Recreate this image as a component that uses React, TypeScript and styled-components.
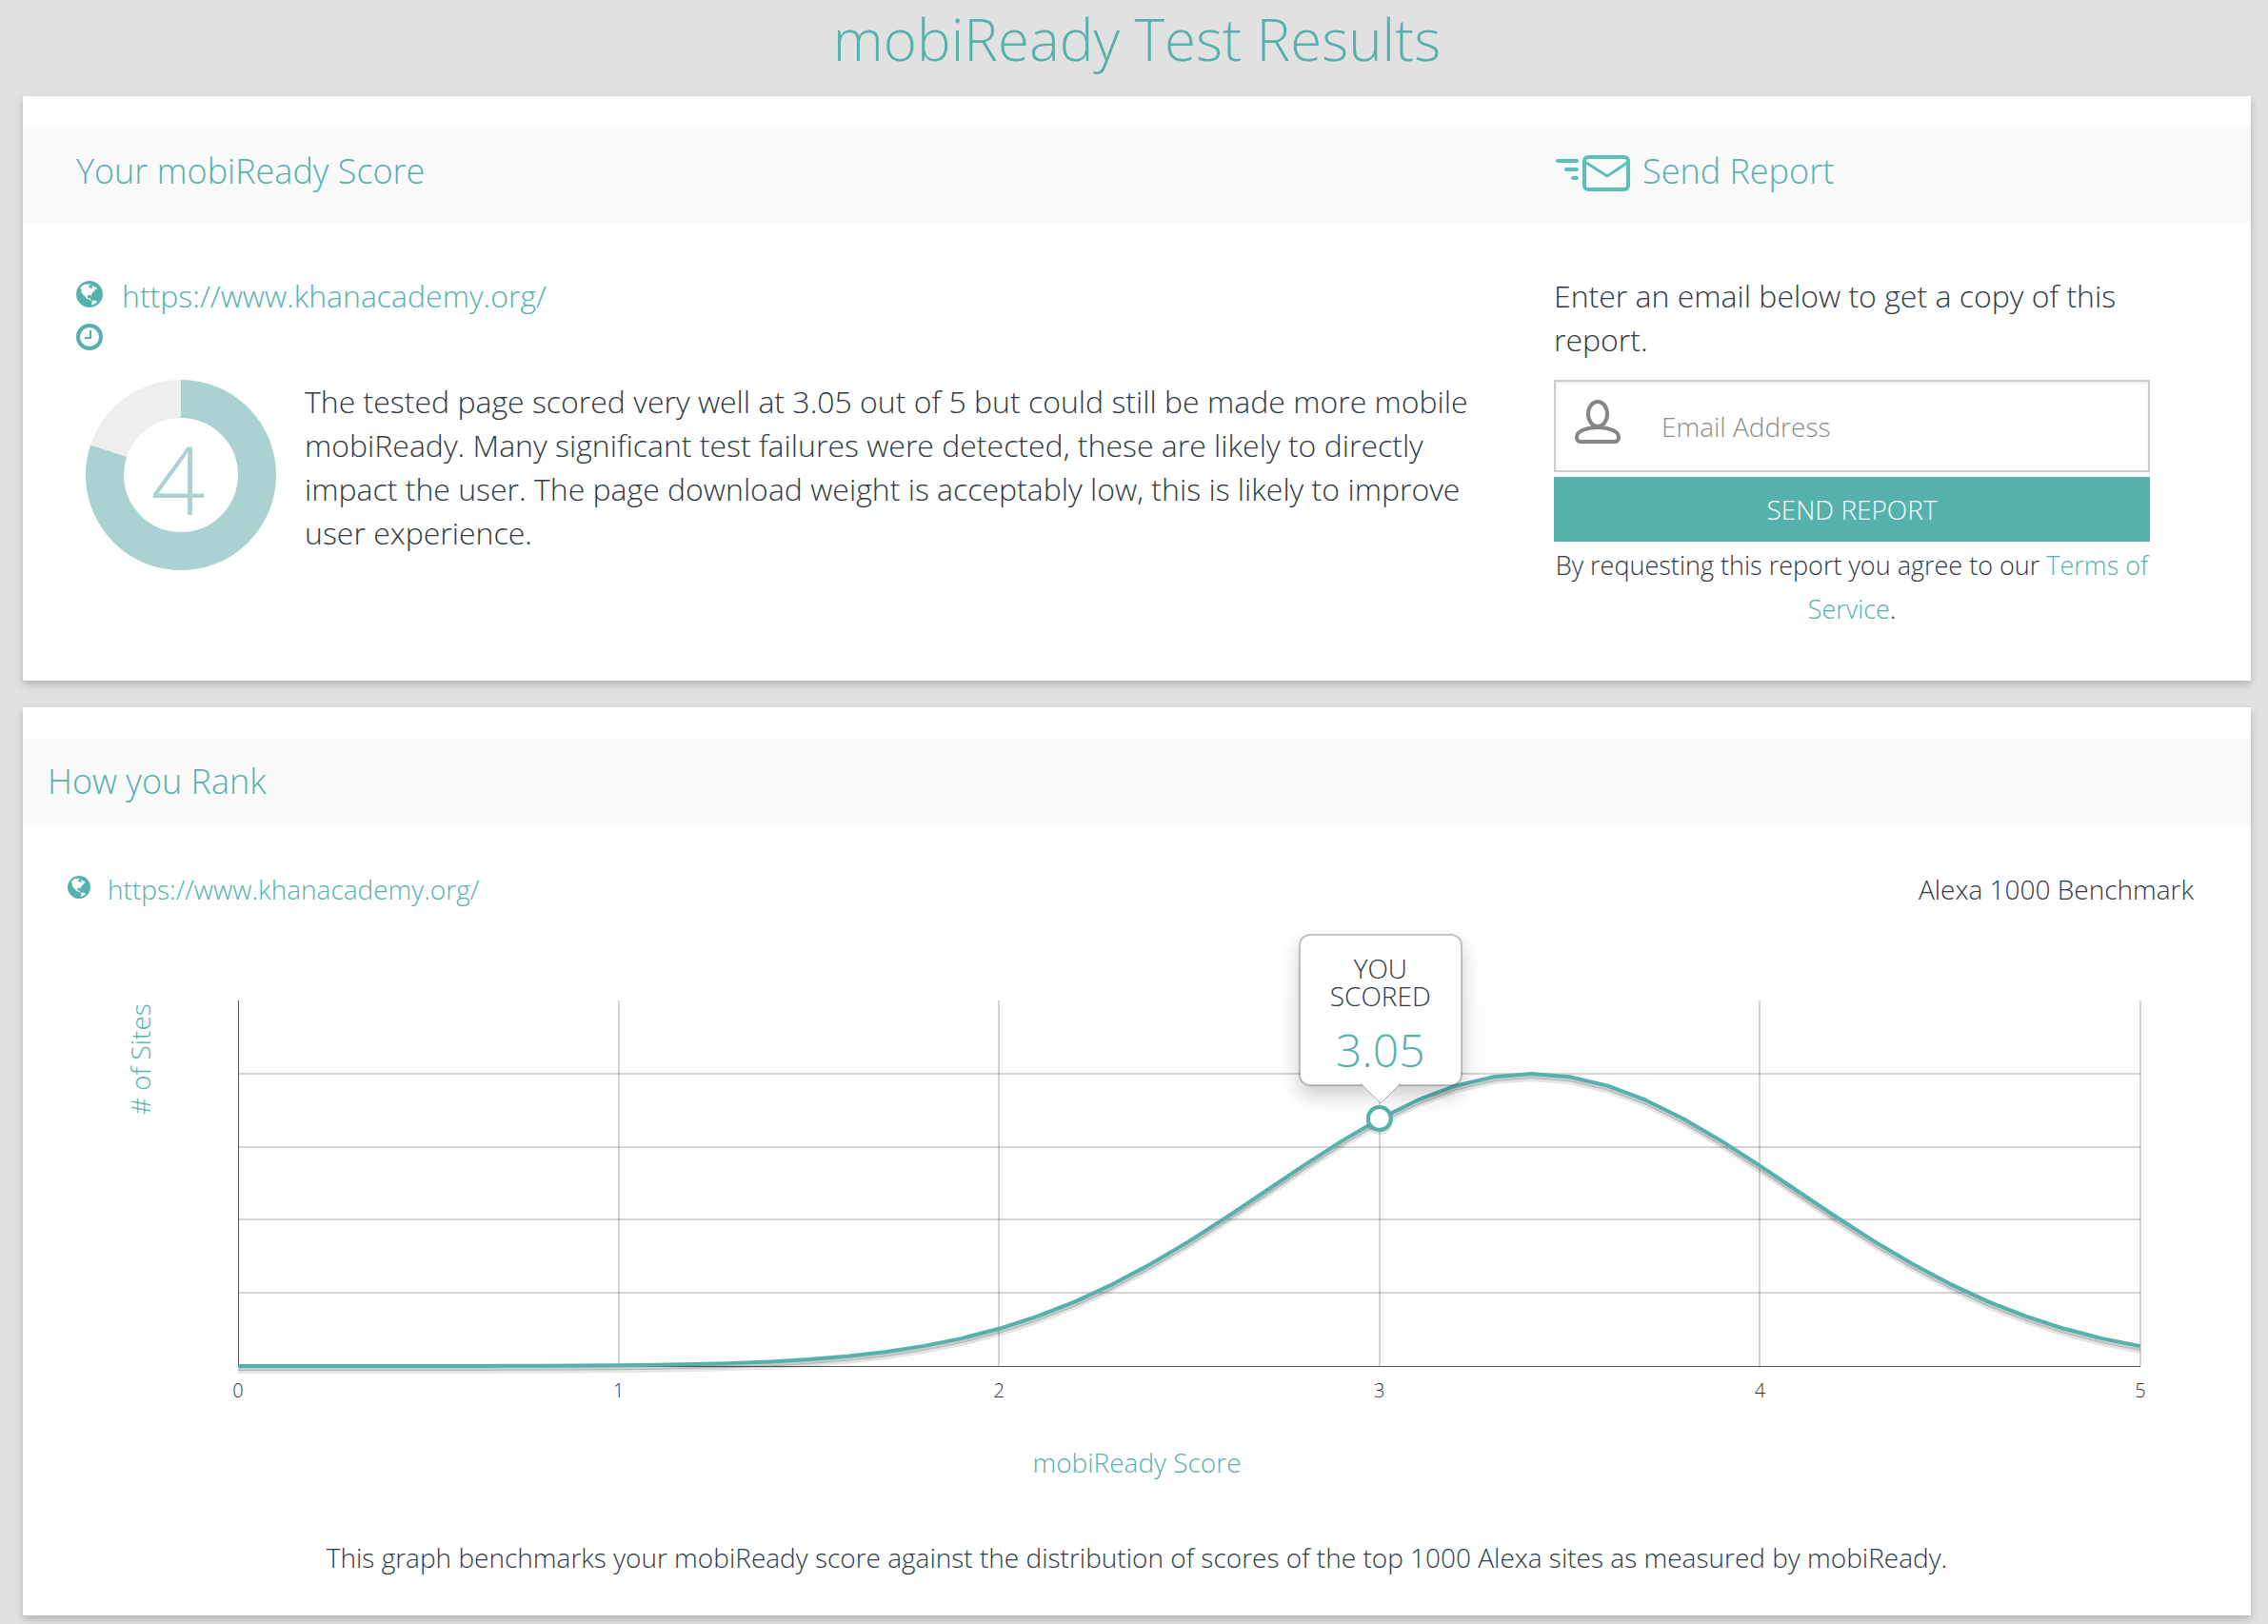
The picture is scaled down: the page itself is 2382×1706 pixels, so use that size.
import React from "react";
import styled, { createGlobalStyle, css } from "styled-components";

const teal = "#55b1ab";
const ink = "#2f3a45";

const GlobalStyle = createGlobalStyle`
  *, *::before, *::after { box-sizing: border-box; }
  body {
    margin: 0;
    background: #e1e1e1;
    color: ${ink};
    font: 300 32px/46px "Open Sans", "Noto Sans", sans-serif;
  }
  h1, h2, p { margin: 0; font-weight: 300; }
  a { color: ${teal}; text-decoration: none; }
  svg { display: block; flex: none; }
`;

const Page = styled.main`
  display: flex;
  flex-direction: column;
  gap: 28px;
  padding: 0 18px 9px 24px;
`;

const Title = styled.h1`
  height: 73px;
  color: ${teal};
  font-size: 60px;
  line-height: 82px;
  text-align: center;
`;

const Card = styled.section`
  padding-top: 32px;
  background: #fff;
  box-shadow: 0 4px 8px rgba(0, 0, 0, 0.2);
`;

const columns = css`
  display: grid;
  grid-template-columns: minmax(0, 1fr) 626px;
  column-gap: 80px;
  padding-left: 56px;
  padding-right: 106px;
`;

const ScoreHeader = styled.div`
  ${columns}
  height: 101px;
  padding-bottom: 8px;
  align-items: center;
  background: #fafafa;
`;

const RankHeader = styled.div`
  display: flex;
  align-items: center;
  height: 92px;
  padding: 0 26px;
  background: #fafafa;
`;

const Heading = styled.h2`
  display: flex;
  align-items: center;
  gap: 13px;
  color: ${teal};
  font-size: 36px;
  line-height: 48px;
`;

const ScoreBody = styled.div`
  ${columns}
  padding-top: 54px;
  padding-bottom: 52px;
`;

const SiteLine = styled.div`
  display: flex;
  align-items: center;
  gap: 20px;
  height: 46px;
  color: ${teal};
`;

const SmallSiteLine = styled(SiteLine)`
  gap: 18px;
`;

const ClockLine = styled(SiteLine)`
  height: 40px;
`;

const Summary = styled.div`
  display: flex;
  gap: 30px;
  padding: 25px 0 0 10px;
`;

const SendForm = styled.form`
  display: flex;
  flex-direction: column;
`;

const Field = styled.label`
  display: flex;
  align-items: center;
  gap: 43px;
  height: 97px;
  margin: 19px 0 5px;
  padding: 0 20px;
  border: 2px solid #ccc;
  box-shadow: inset 0 2px 2px rgba(0, 0, 0, 0.075);
`;

const EmailInput = styled.input`
  flex: 1;
  min-width: 0;
  padding: 0;
  border: 0;
  outline: 0;
  background: transparent;
  color: ${ink};
  font: inherit;
  font-size: 28px;
  &::placeholder { color: #8c8c8c; opacity: 1; }
`;

const SendButton = styled.button`
  height: 68px;
  border: 0;
  background: ${teal};
  color: #fff;
  font: inherit;
  font-size: 28px;
  text-transform: uppercase;
  cursor: pointer;
`;

const Terms = styled.p`
  padding-top: 2px;
  font-size: 27px;
  text-align: center;
`;

const BenchmarkBar = styled.div`
  display: flex;
  justify-content: space-between;
  padding: 44px 60px 0 47px;
  font-size: 28px;
`;

const Plot = styled.figure`
  display: grid;
  grid-template-columns: 96px minmax(0, 1fr);
  column-gap: 80px;
  margin: 0;
  padding: 94px 116px 0 50px;
`;

const AxisY = styled.span`
  justify-self: end;
  height: 120px;
  color: ${teal};
  font-size: 28px;
  line-height: 46px;
  writing-mode: vertical-rl;
  transform: rotate(180deg);
`;

const Chart = styled.div`
  position: relative;
`;

const Curve = styled.svg`
  width: 100%;
  height: 384px;
  overflow: visible;
`;

const Ticks = styled.div`
  display: flex;
  justify-content: space-between;
  margin: 12px -10px 0;
  color: #333;
  font-size: 20px;
  line-height: 28px;
  span { width: 20px; text-align: center; }
`;

const AxisX = styled.p`
  padding-top: 38px;
  color: ${teal};
  font-size: 28px;
  text-align: center;
`;

const Note = styled.p`
  padding: 54px 0 38px;
  font-size: 28px;
  text-align: center;
`;

const Bubble = styled.div`
  position: absolute;
  left: 60%;
  top: -70px;
  width: 172px;
  height: 160px;
  margin-left: -85px;
  padding-top: 20px;
  border: 2px solid rgba(0, 0, 0, 0.22);
  border-radius: 12px;
  background: #fff;
  background-clip: padding-box;
  box-shadow: 0 10px 20px rgba(0, 0, 0, 0.2);
  font-size: 28px;
  line-height: 29px;
  text-align: center;
`;

const BubbleScore = styled.strong`
  display: block;
  color: ${teal};
  font-size: 48px;
  font-weight: 350;
  line-height: 84px;
`;

const BubbleTip = styled.svg`
  position: absolute;
  left: 63px;
  top: 155px;
`;

const DonutScore = styled.text`
  font-size: 100px;
  font-weight: 350;
  fill: #a9d2d0;
  text-anchor: middle;
`;

const GlobeIcon = styled.svg`
  margin-bottom: 4px;
  fill: ${teal};
`;

const Globe = ({ size }: { size: number }) => (
  <GlobeIcon width={size} height={size} viewBox="128 128 1536 1536" aria-hidden>
    <path d="M896 128q209 0 385.500 103t279.500 279.500 103 385.500-103 385.500-279.500 279.500-385.500 103-385.500-103-279.500-279.500-103-385.500 103-385.500 279.500-279.500 385.500-103zm274 521q-2 1-9.500 9.500t-13.500 9.500q2 0 4.500-5t5-11 3.500-7q6-7 22-15 14-6 52-12 34-8 51 11-2-2 9.500-13t14.500-12q3-2 15-4.500t15-7.500l2-22q-12 1-17.500-7t-6.500-21q0 2-6 8 0-7-4.500-8t-11.500 1-9 1q-10-3-15-7.500t-8-16.500-4-15q-2-5-9.500-11t-9.500-10q-1-2-2.500-5.500t-3-6.500-4-5.500-5.500-2.500-7 5-7.500 10-4.500 5q-3-2-6-1.500t-4.500 1-4.500 3-5 3.500q-3 2-8.500 3t-8.500 2q15-5-1-11-10-4-16-3 9-4 7.500-12t-8.500-14h5q-1-4-8.500-8.500t-17.500-8.500-13-6q-8-5-34-9.500t-33-.5q-5 6-4.500 10.500t4 14 3.500 12.500q1 6-5.500 13t-6.500 12q0 7 14 15.500t10 21.500q-3 8-16 16t-16 12q-5 8-1.500 18.500t10.500 16.500q2 2 1.500 4t-3.500 4.500-5.500 4-6.500 3.500l-3 2q-11 5-20.500-6t-13.500-26q-7-25-16-30-23-8-29 1-5-13-41-26-25-9-58-4 6-1 0-15-7-15-19-12 3-6 4-17.500t1-13.500q3-13 12-23 1-1 7-8.500t9.500-13.500.5-6q35 4 50-11 5-5 11.500-17t10.500-17q9-6 14-5.500t14.500 5.500 14.500 5q14 1 15.500-11t-7.500-20q12 1 3-17-4-7-8-9-12-4-27 5-8 4 2 8-1-1-9.500 10.500t-16.500 17.500-16-5q-1-1-5.500-13.500t-9.500-13.500q-8 0-16 15 3-8-11-15t-24-8q19-12-8-27-7-4-20.500-5t-19.500 4q-5 7-5.500 11.500t5 8 10.500 5.500 11.500 4 8.500 3q14 10 8 14-2 1-8.500 3.500t-11.500 4.500-6 4q-3 4 0 14t-2 14q-5-5-9-17.500t-7-16.500q7 9-25 6l-10-1q-4 0-16 2t-20.500 1-13.500-8q-4-8 0-20 1-4 4-2-4-3-11-9.500t-10-8.500q-46 15-94 41 6 1 12-1 5-2 13-6.500t10-5.500q34-14 42-7l5-5q14 16 20 25-7-4-30-1-20 6-22 12 7 12 5 18-4-3-11.500-10t-14.500-11-15-5q-16 0-22 1-146 80-235 222 7 7 12 8 4 1 5 9t2.500 11 11.500-3q9 8 3 19 1-1 44 27 19 17 21 21 3 11-10 18-1-2-9-9t-9-4q-3 5 .5 18.500t10.500 12.500q-7 0-9.500 16t-2.500 35.500-1 23.500l2 1q-3 12 5.500 34.500t21.500 19.500q-13 3 20 43 6 8 8 9 3 2 12 7.500t15 10 10 10.500q4 5 10 22.500t14 23.500q-2 6 9.500 20t10.500 23q-1 0-2.500 1t-2.500 1q3 7 15.500 14t15.500 13q1 3 2 10t3 11 8 2q2-20-24-62-15-25-17-29-3-5-5.500-15.500t-4.500-14.500q2 0 6 1.500t8.500 3.500 7.500 4 2 3q-3 7 2 17.500t12 18.500 17 19 12 13q6 6 14 19.500t0 13.500q9 0 20 10t17 20q5 8 8 26t5 24q2 7 8.500 13.500t12.500 9.500l16 8 13 7q5 2 18.500 10.500t21.500 11.500q10 4 16 4t14.500-2.500 13.500-3.500q15-2 29 15t21 21q36 19 55 11-2 1 .5 7.500t8 15.500 9 14.500 5.500 8.500q5 6 18 15t18 15q6-4 7-9-3 8 7 20t18 10q14-3 14-32-31 15-49-18 0-1-2.500-5.500t-4-8.500-2.500-8.500 0-7.500 5-3q9 0 10-3.500t-2-12.500-4-13q-1-8-11-20t-12-15q-5 9-16 8t-16-9q0 1-1.500 5.500t-1.500 6.500q-13 0-15-1 1-3 2.500-17.500t3.500-22.500q1-4 5.500-12t7.500-14.500 4-12.500-4.500-9.500-17.500-2.500q-19 1-26 20-1 3-3 10.500t-5 11.500-9 7q-7 3-24 2t-24-5q-13-8-22.500-29t-9.500-37q0-10 2.500-26.500t3-25-5.500-24.500q3-2 9-9.500t10-10.500q2-1 4.500-1.500t4.500 0 4-1.500 3-6q-1-1-4-3-3-3-4-3 7 3 28.500-1.500t27.500 1.500q15 11 22-2 0-1-2.500-9.500t-.5-13.500q5 27 29 9 3 3 15.500 5t17.500 5q3 2 7 5.500t5.500 4.500 5-.5 8.500-6.500q10 14 12 24 11 40 19 44 7 3 11 2t4.500-9.500 0-14-1.500-12.500l-1-8v-18l-1-8q-15-3-18.500-12t1.500-18.500 15-18.500q1-1 8-3.500t15.500-6.500 12.500-8q21-19 15-35 7 0 11-9-1 0-5-3t-7.500-5-4.500-2q9-5 2-16 5-3 7.500-11t7.500-10q9 12 21 2 8-8 1-16 5-7 20.500-10.500t18.500-9.500q7 2 8-2t1-12 3-12q4-5 15-9t13-5l17-11q3-4 0-4 18 2 31-11 10-11-6-20 3-6-3-9.500t-15-5.500q3-1 11.500-.5t10.500-1.500q15-10-7-16-17-5-43 12zm-163 877q206-36 351-189-3-3-12.500-4.500t-12.500-3.500q-18-7-24-8 1-7-2.500-13t-8-9-12.500-8-11-7q-2-2-7-6t-7-5.500-7.500-4.500-8.500-2-10 1l-3 1q-3 1-5.500 2.500t-5.500 3-4 3 0 2.500q-21-17-36-22-5-1-11-5.500t-10.500-7-10-1.500-11.500 7q-5 5-6 15t-2 13q-7-5 0-17.500t2-18.500q-3-6-10.500-4.500t-12 4.500-11.500 8.500-9 6.500-8.500 5.500-8.500 7.500q-3 4-6 12t-5 11q-2-4-11.500-6.500t-9.500-5.500q2 10 4 35t5 38q7 31-12 48-27 25-29 40-4 22 12 26 0 7-8 20.500t-7 21.500q0 6 2 16z" />
  </GlobeIcon>
);

const Clock = () => (
  <svg width="28" height="28" viewBox="0 0 28 28" fill="none" stroke={teal} aria-hidden>
    <circle cx="14" cy="14" r="12" strokeWidth="4" />
    <path d="M15 7v8H9" strokeWidth="2" />
  </svg>
);

const FlyingMail = () => (
  <svg width="80" height="44" viewBox="0 -5 80 44" fill="none" stroke="#5bc0b8" strokeLinecap="round" aria-hidden>
    <rect x="32" y="2" width="46" height="34" rx="4" strokeWidth="4" />
    <path d="M34 8l22 14 21-14" strokeWidth="3" />
    <path d="M4 6h20M13 15h11M20 24h4" strokeWidth="4" />
  </svg>
);

const Person = () => (
  <svg width="48" height="58" viewBox="0 0 48 58" fill="none" stroke="#858585" strokeWidth="4" aria-hidden>
    <ellipse cx="24" cy="16" rx="10" ry="13" />
    <path d="M24 30C12 30 2 34 2 40q0 5 4 5h36q4 0 4-5C46 34 36 30 24 30z" />
  </svg>
);

const Donut = ({ score }: { score: number }) => {
  const circumference = 2 * Math.PI * 80;
  return (
    <svg width="200" height="200" viewBox="0 0 200 200" role="img" aria-label={`Score ${score} out of 5`}>
      <g fill="none" strokeWidth="40" transform="rotate(-90 100 100)">
        <circle cx="100" cy="100" r="80" stroke="#eee" />
        <circle
          cx="100"
          cy="100"
          r="80"
          stroke="#a9d2d0"
          strokeDasharray={`${(circumference * score) / 5} ${circumference}`}
        />
      </g>
      <DonutScore x="97" y="142">
        {score}
      </DonutScore>
    </svg>
  );
};

const W = 1998;
const H = 384;
const points = Array.from({ length: 51 }, (_, i) => {
  const score = i / 10;
  const height = 307 * Math.exp(-((score - 3.4) ** 2) / (2 * 0.69 ** 2));
  return `${(score / 5) * W},${H - height}`;
}).join(" ");

const Distribution = () => (
  <Curve viewBox={`0 0 ${W} ${H}`} preserveAspectRatio="none" role="img" aria-label="Distribution of scores">
    {[0, 2, 4].map((band) => (
      <rect key={band} y={(band * H) / 5} width={W} height={H / 5} fill="#fdfdfb" />
    ))}
    <g stroke="#000" strokeOpacity="0.16" strokeWidth="2" shapeRendering="crispEdges">
      {[1, 2, 3, 4].map((row) => (
        <path key={row} d={`M0 ${(row * H) / 5}H${W}`} />
      ))}
      {[1, 2, 3, 4, 5].map((col) => (
        <path key={col} d={`M${(col * W) / 5} 0V${H}`} />
      ))}
    </g>
    <path d={`M0 0V${H}H${W}`} fill="none" stroke="#545454" shapeRendering="crispEdges" />
    <g fill="none" strokeLinejoin="round">
      <polyline points={points} stroke="#000" strokeOpacity="0.1" strokeWidth="4" transform="translate(0 6)" />
      <polyline points={points} stroke="#000" strokeOpacity="0.2" strokeWidth="4" transform="translate(0 3)" />
      <polyline points={points} stroke={teal} strokeWidth="4" />
    </g>
    <circle cx={W * 0.6} cy="127" r="12" fill="none" stroke="#000" strokeOpacity="0.12" strokeWidth="4" />
    <circle cx={W * 0.6} cy="124" r="12" fill="#fff" stroke={teal} strokeWidth="4" />
  </Curve>
);

export default function App() {
  return (
    <>
      <GlobalStyle />
      <Page>
        <Title>mobiReady Test Results</Title>
        <Card>
          <ScoreHeader>
            <Heading>Your mobiReady Score</Heading>
            <Heading>
              <FlyingMail />
              Send Report
            </Heading>
          </ScoreHeader>
          <ScoreBody>
            <div>
              <SiteLine>
                <Globe size={28} />
                <a href="https://www.khanacademy.org/">https://www.khanacademy.org/</a>
              </SiteLine>
              <ClockLine>
                <Clock />
              </ClockLine>
              <Summary>
                <Donut score={4} />
                <p>
                  The tested page scored very well at 3.05 out of 5 but could still be made more mobile mobiReady. Many
                  significant test failures were detected, these are likely to directly impact the user. The page
                  download weight is acceptably low, this is likely to improve user experience.
                </p>
              </Summary>
            </div>
            <SendForm onSubmit={(event) => event.preventDefault()}>
              <p>Enter an email below to get a copy of this report.</p>
              <Field>
                <Person />
                <EmailInput type="email" placeholder="Email Address" aria-label="Email Address" />
              </Field>
              <SendButton type="submit">Send Report</SendButton>
              <Terms>
                By requesting this report you agree to our <a href="#terms">Terms of Service</a>.
              </Terms>
            </SendForm>
          </ScoreBody>
        </Card>
        <Card>
          <RankHeader>
            <Heading>How you Rank</Heading>
          </RankHeader>
          <BenchmarkBar>
            <SmallSiteLine>
              <Globe size={24} />
              <a href="https://www.khanacademy.org/">https://www.khanacademy.org/</a>
            </SmallSiteLine>
            <p>Alexa 1000 Benchmark</p>
          </BenchmarkBar>
          <Plot>
            <AxisY># of Sites</AxisY>
            <Chart>
              <Distribution />
              <Ticks>
                {[0, 1, 2, 3, 4, 5].map((tick) => (
                  <span key={tick}>{tick}</span>
                ))}
              </Ticks>
              <Bubble>
                YOU
                <br />
                SCORED
                <BubbleScore>3.05</BubbleScore>
                <BubbleTip width="42" height="24" viewBox="0 0 42 24" aria-hidden>
                  <path d="M0 0L21 21L42 0" fill="#fff" stroke="#b0b0b0" />
                </BubbleTip>
              </Bubble>
            </Chart>
          </Plot>
          <AxisX>mobiReady Score</AxisX>
          <Note>
            This graph benchmarks your mobiReady score against the distribution of scores of the top 1000 Alexa sites as
            measured by mobiReady.
          </Note>
        </Card>
      </Page>
    </>
  );
}
